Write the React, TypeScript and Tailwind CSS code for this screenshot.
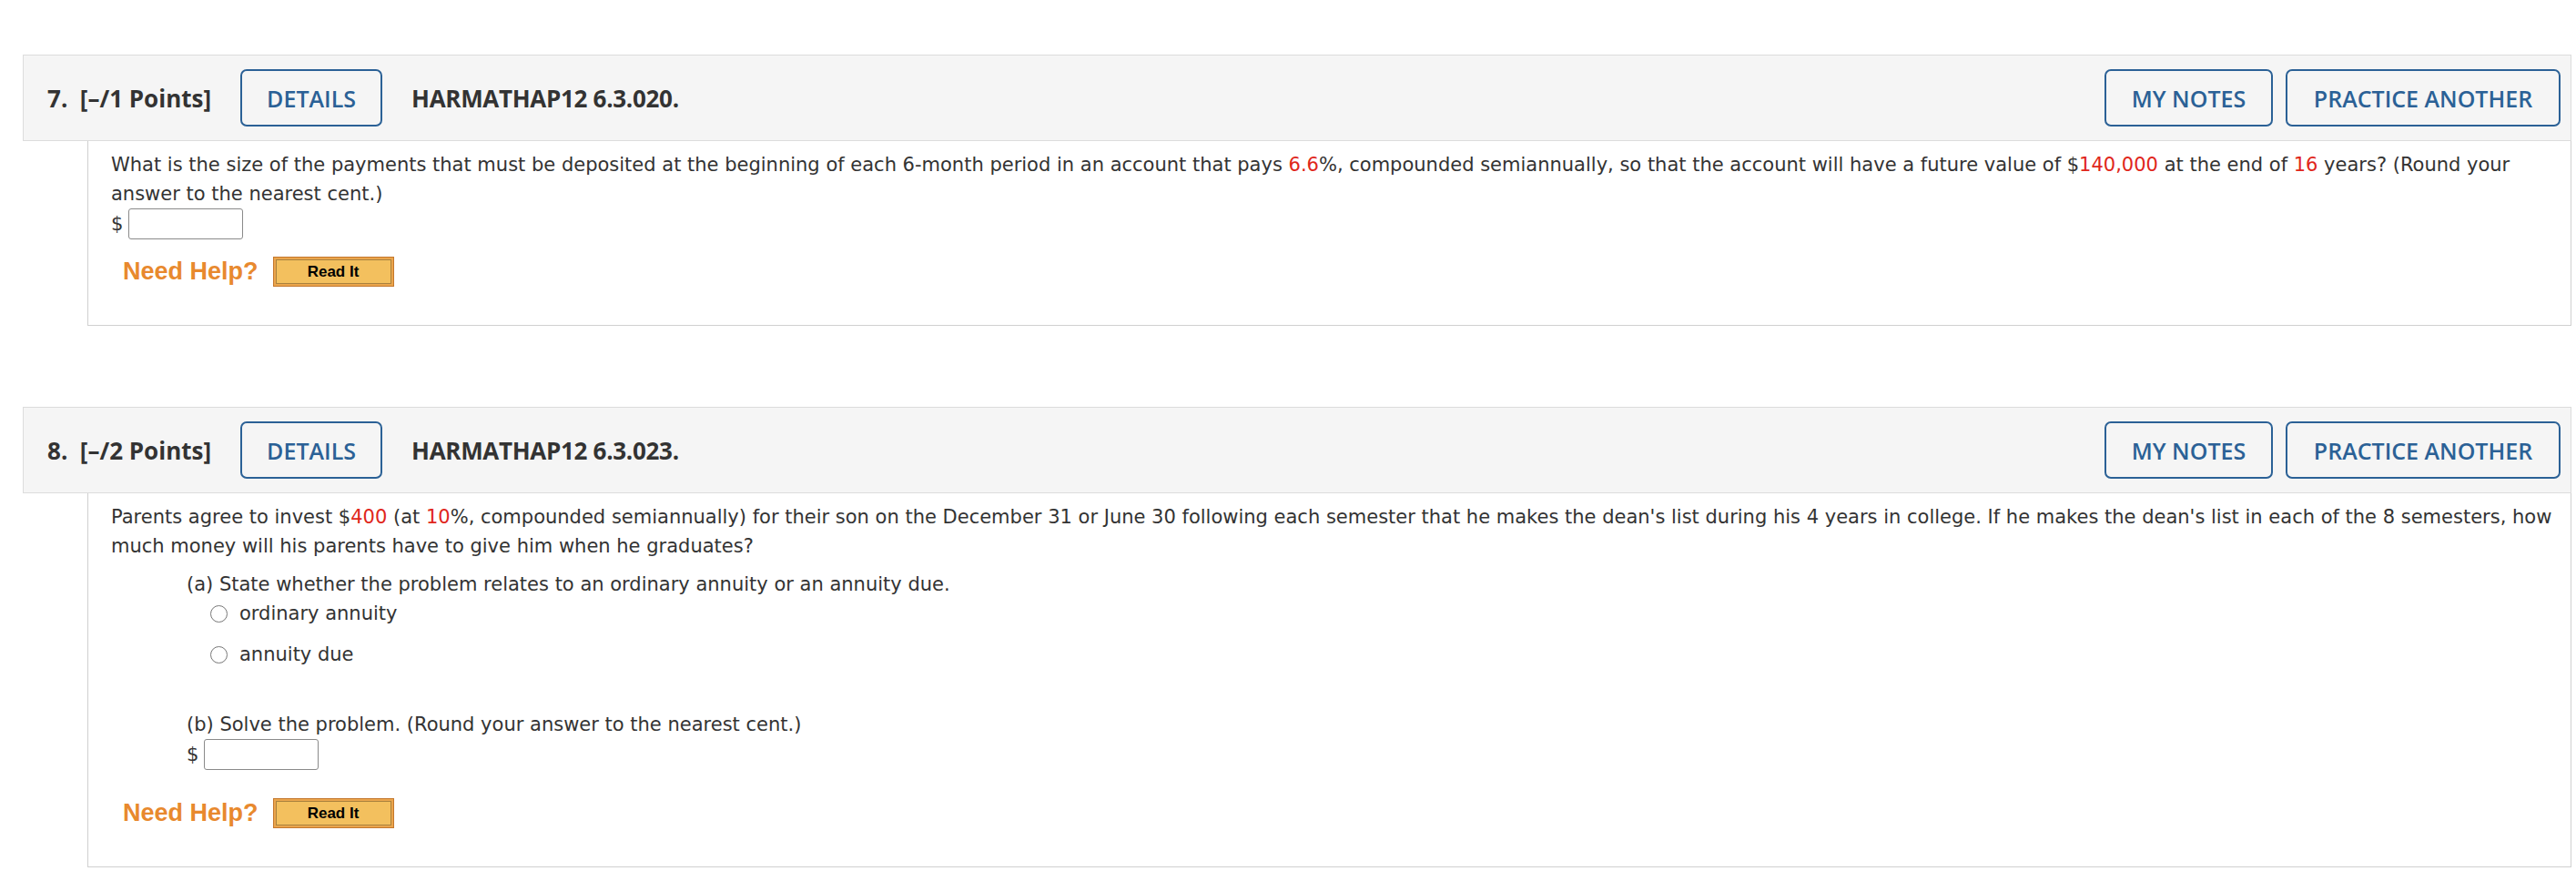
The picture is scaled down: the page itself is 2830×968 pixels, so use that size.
import React from "react";

const Red = ({ children }: { children: React.ReactNode }) => (
  <span className="text-[#e0261b]">{children}</span>
);

const HeadButton = ({ label, className = "" }: { label: string; className?: string }) => (
  <button
    className={
      "h-[63px] rounded-[7px] border-2 border-[#2b6196] bg-transparent text-[25px] font-semibold text-[#2b6196] font-['Open_Sans',sans-serif] " +
      className
    }
  >
    {label}
  </button>
);

const Header = ({ num, points, code }: { num: string; points: string; code: string }) => (
  <div className="flex h-[95px] items-center border border-[#dcdcdc] bg-[#f5f5f5] pl-[26px] pr-[11px] font-['Open_Sans',sans-serif] text-[26px] font-bold text-[#333]">
    <span className="whitespace-pre">{num}.  [–/{points} Points]</span>
    <HeadButton label="DETAILS" className="ml-[32px] w-[156px]" />
    <span className="ml-[32px] tracking-[-0.3px]">{code}</span>
    <div className="ml-auto flex gap-[14px]">
      <HeadButton label="MY NOTES" className="w-[185px]" />
      <HeadButton label="PRACTICE ANOTHER" className="w-[302px]" />
    </div>
  </div>
);

const DollarInput = ({ className = "" }: { className?: string }) => (
  <div className={"flex items-center gap-[6px] " + className}>
    <span>$</span>
    <div className="h-[34px] w-[126px] rounded-[3px] border border-[#8a8a8a] bg-white" />
  </div>
);

const NeedHelp = ({ className = "" }: { className?: string }) => (
  <div className={"ml-[13px] flex items-center gap-[16px] " + className}>
    <span className="font-['Liberation_Sans',Arial,sans-serif] text-[27px] font-bold leading-none text-[#e8892e]">
      Need Help?
    </span>
    <div className="flex h-[33px] w-[133px] items-stretch border border-[#c4772c] bg-[#eaa54c] p-[2px]">
      <div className="flex flex-1 items-center justify-center border border-[#a9813e] bg-[#f3c05e] font-['Liberation_Sans',Arial,sans-serif] text-[17px] font-bold text-black">
        Read It
      </div>
    </div>
  </div>
);

const Radio = ({ label, className = "" }: { label: string; className?: string }) => (
  <div className={"ml-[26px] flex items-center gap-[13px] " + className}>
    <span className="h-[19px] w-[19px] rounded-full border-[1.5px] border-[#777] bg-white" />
    <span>{label}</span>
  </div>
);

export default function App() {
  return (
    <div className="min-h-screen bg-white pl-[25px] pr-[5px] pt-[60px] text-[#333] font-['DejaVu_Sans',Verdana,sans-serif] text-[21px] leading-[32px]">
      {/* question 7 */}
      <Header num="7" points="1" code="HARMATHAP12 6.3.020." />
      <div className="ml-[71px] border-x border-b border-[#d0d0d0] pb-[42px] pl-[25px] pt-[10px]">
        <p className="whitespace-nowrap">
          What is the size of the payments that must be deposited at the beginning of each 6-month period in an
          account that pays <Red>6.6</Red>%, compounded semiannually, so that the account will have a future value of
          $<Red>140,000</Red> at the end of <Red>16</Red> years? (Round your
          <br />
          answer to the nearest cent.)
        </p>
        <DollarInput />
        <NeedHelp className="mt-[19px]" />
      </div>

      {/* question 8 */}
      <div className="mt-[89px]">
        <Header num="8" points="2" code="HARMATHAP12 6.3.023." />
      </div>
      <div className="ml-[71px] border-x border-b border-[#d0d0d0] pb-[42px] pl-[25px] pt-[10px]">
        <p className="whitespace-nowrap">
          Parents agree to invest $<Red>400</Red> (at <Red>10</Red>%, compounded semiannually) for their son on the
          December 31 or June 30 following each semester that he makes the dean's list during his 4 years in college.
          If he makes the dean's list in each of the 8 semesters, how
          <br />
          much money will his parents have to give him when he graduates?
        </p>
        <div className="ml-[83px] mt-[10px]">
          <p>(a) State whether the problem relates to an ordinary annuity or an annuity due.</p>
          <Radio label="ordinary annuity" />
          <Radio label="annuity due" className="mt-[13px]" />
          <p className="mt-[45px]">(b) Solve the problem. (Round your answer to the nearest cent.)</p>
          <DollarInput />
        </div>
        <NeedHelp className="mt-[31px]" />
      </div>
    </div>
  );
}
